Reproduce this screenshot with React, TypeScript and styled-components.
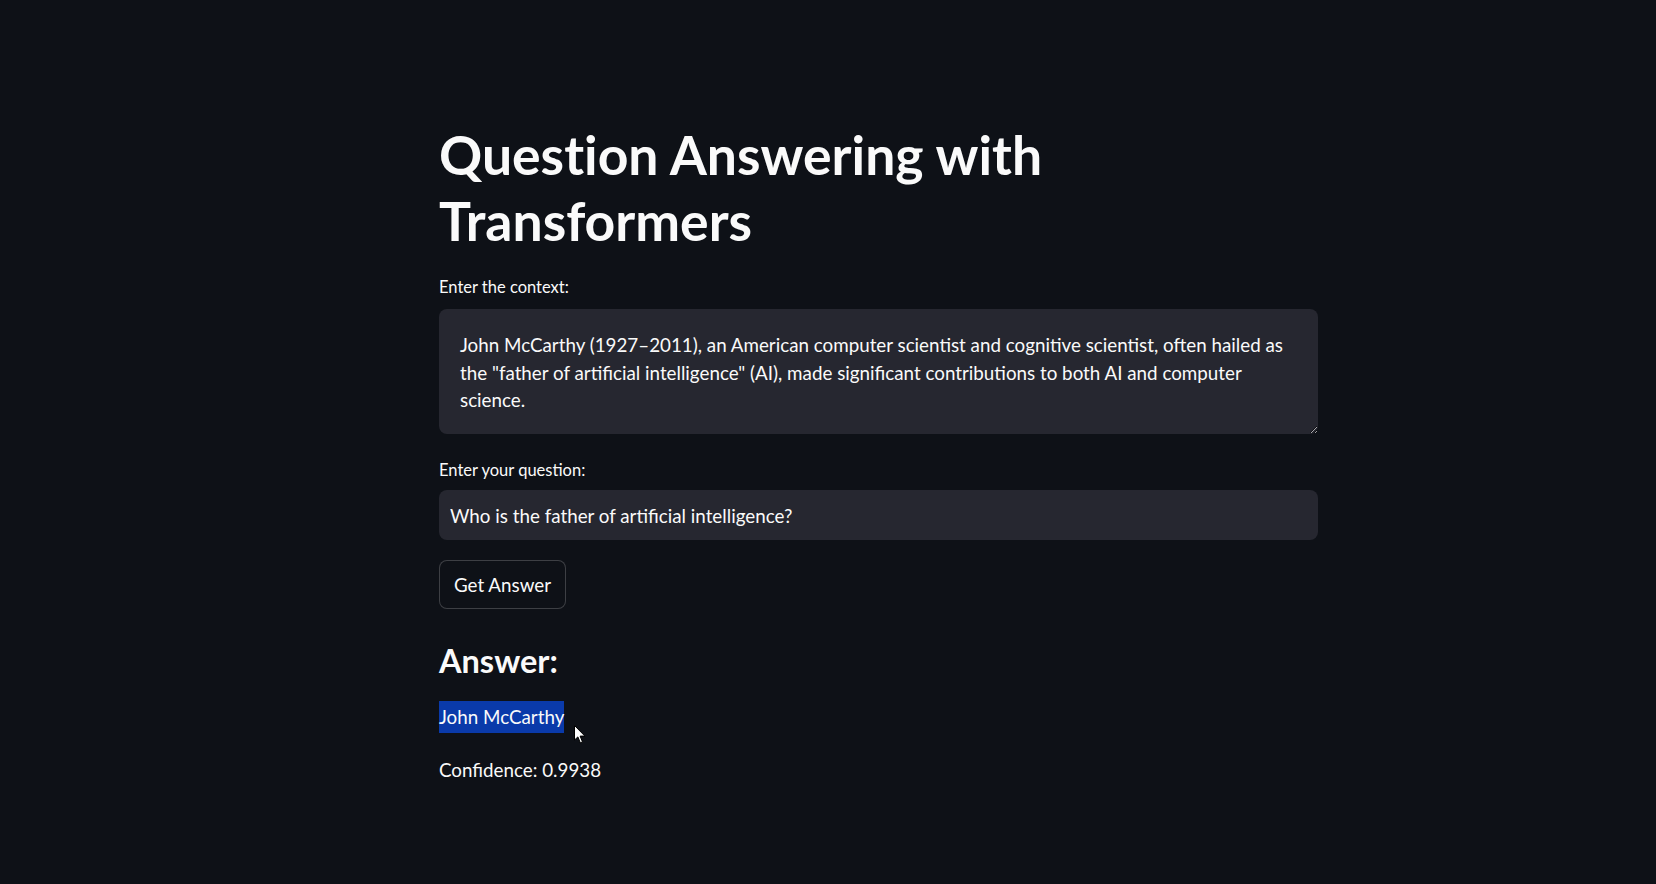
import React from "react";
import styled, { createGlobalStyle } from "styled-components";

const GlobalStyle = createGlobalStyle`
  html, body {
    margin: 0;
    padding: 0;
    background: #0e1117;
    color-scheme: dark;
  }
  body {
    font-family: "Lato", "Noto Sans", sans-serif;
    color: #fafafa;
  }
`;

const Page = styled.main`
  min-height: 884px;
  background: #0e1117;
  padding: 121px 0 0 439px;
  box-sizing: border-box;
`;

const Block = styled.div`
  width: 879px;
  display: flex;
  flex-direction: column;
  align-items: flex-start;
`;

const Title = styled.h1`
  margin: 0;
  font-family: "Lato", sans-serif;
  font-weight: 700;
  font-size: 53.5px;
  line-height: 66px;
  color: #fafafa;
  font-variant-ligatures: none;
`;

const Label = styled.label<{ $top: number }>`
  display: block;
  margin-top: ${(p) => p.$top}px;
  font-size: 16.5px;
  line-height: 20px;
  color: #fafafa;
`;

const TextArea = styled.textarea`
  box-sizing: border-box;
  margin-top: 12px;
  width: 879px;
  height: 125px;
  padding: 22px 21px 18px 21px;
  border: none;
  border-radius: 8px;
  background: #262730;
  color: #fafafa;
  font-family: "Lato", sans-serif;
  font-size: 18.8px;
  line-height: 27.5px;
  resize: vertical;
  outline: none;
  overflow: hidden;
`;

const TextInput = styled.input`
  box-sizing: border-box;
  margin-top: 10px;
  width: 879px;
  height: 50px;
  padding: 0 11px;
  border: none;
  border-radius: 8px;
  background: #262730;
  color: #fafafa;
  font-family: "Lato", sans-serif;
  font-size: 18.8px;
  outline: none;
`;

const Button = styled.button`
  box-sizing: border-box;
  margin-top: 20px;
  height: 49px;
  padding: 0 14px;
  border: 1px solid rgba(250, 250, 250, 0.2);
  border-radius: 8px;
  background: #0e1117;
  color: #fafafa;
  font-family: "Lato", sans-serif;
  font-size: 18.8px;
  cursor: pointer;
`;

const AnswerHeading = styled.h3`
  margin: 32px 0 0;
  font-family: "Lato", sans-serif;
  font-weight: 700;
  font-size: 32.5px;
  line-height: 40px;
  color: #fafafa;
`;

const AnswerRow = styled.div`
  position: relative;
  margin-top: 20px;
  font-size: 18.8px;
  line-height: 32px;
`;

const Selected = styled.span`
  display: inline-block;
  background: #0a3aaa;
  color: #fafafa;
`;

const Cursor = styled.svg`
  position: absolute;
  left: 135px;
  top: 24px;
  width: 12px;
  height: 19px;
`;

const Paragraph = styled.p`
  margin: 21px 0 0;
  font-size: 18.8px;
  line-height: 32px;
  color: #fafafa;
`;

const contextText =
  'John McCarthy (1927\u20132011), an American computer scientist and cognitive scientist, often hailed as the "father of artificial intelligence" (AI), made significant contributions to both AI and computer science.';

export default function App() {
  return (
    <>
      <GlobalStyle />
      <Page>
        <Block>
          <Title>
            Question Answering with
            <br />
            Transformers
          </Title>
          <Label $top={24}>Enter the context:</Label>
          <TextArea defaultValue={contextText} />
          <Label $top={26}>Enter your question:</Label>
          <TextInput defaultValue="Who is the father of artificial intelligence?" />
          <Button>Get Answer</Button>
          <AnswerHeading>Answer:</AnswerHeading>
          <AnswerRow>
            <Selected>John McCarthy</Selected>
            <Cursor viewBox="0 0 12 19">
              <path
                d="M0.5 0.5 L0.5 15 L3.9 11.9 L6.3 17.8 L8.5 16.9 L6.1 11.1 L10.9 11.1 Z"
                fill="#ffffff"
                stroke="#000000"
                strokeWidth="1"
                strokeLinejoin="round"
              />
            </Cursor>
          </AnswerRow>
          <Paragraph>Confidence: 0.9938</Paragraph>
        </Block>
      </Page>
    </>
  );
}
